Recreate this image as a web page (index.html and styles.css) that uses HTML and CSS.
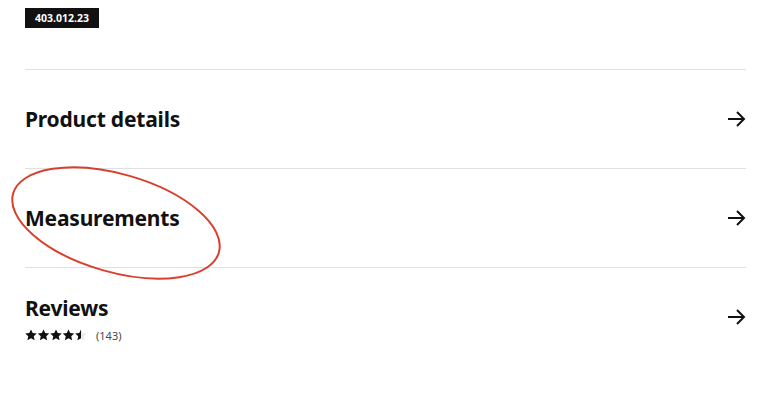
FILE: index.html
```html
<!DOCTYPE html>
<html lang="en">

<head>
  <meta charset="UTF-8">
  <meta name="viewport" content="width=device-width, initial-scale=1.0">
  <title>Product info</title>
  <link rel="stylesheet" href="styles.css">
</head>

<body>
  <div class="page">
    <span class="article-no">403.012.23</span>

    <div class="sections">
      <a class="section-row" href="#">
        <span class="section-title">Product details</span>
        <svg class="arrow" width="20" height="18" viewBox="0 0 20 18"><path d="M1 9h16M10 2l7 7-7 7" fill="none" stroke="#111" stroke-width="2"/></svg>
      </a>

      <a class="section-row" href="#">
        <span class="section-title">Measurements</span>
        <svg class="arrow" width="20" height="18" viewBox="0 0 20 18"><path d="M1 9h16M10 2l7 7-7 7" fill="none" stroke="#111" stroke-width="2"/></svg>
      </a>

      <a class="section-row" href="#">
        <div class="reviews">
          <span class="section-title">Reviews</span>
          <div class="rating">
            <svg class="stars" width="62" height="12" viewBox="0 0 62 12">
              <defs>
                <path id="star" d="M6 0.4l1.75 3.7 4 0.45-3 2.75 0.85 4-3.6-2.05-3.6 2.05 0.85-4-3-2.75 4-0.45z"/>
                <clipPath id="half"><rect x="0" y="0" width="6" height="12"/></clipPath>
              </defs>
              <use href="#star" x="0" fill="#111"/>
              <use href="#star" x="12.5" fill="#111"/>
              <use href="#star" x="25" fill="#111"/>
              <use href="#star" x="37.5" fill="#111"/>
              <use href="#star" x="50" fill="#ececec"/>
              <use href="#star" x="50" fill="#111" clip-path="url(#half)"/>
            </svg>
            <span class="count">(143)</span>
          </div>
        </div>
        <svg class="arrow" width="20" height="18" viewBox="0 0 20 18"><path d="M1 9h16M10 2l7 7-7 7" fill="none" stroke="#111" stroke-width="2"/></svg>
      </a>
    </div>
  </div>

  <!-- annotation mark -->
  <svg class="circle-mark" width="768" height="410" viewBox="0 0 768 410">
    <ellipse cx="116" cy="223" rx="107" ry="49" transform="rotate(16 116 223)" fill="none" stroke="#d9402c" stroke-width="2"/>
  </svg>
</body>

</html>
```

FILE: styles.css
```css
body {
  margin: 0;
  font-family: 'Noto Sans', 'Open Sans', sans-serif;
  color: #111;
  background-color: #fff;
  position: relative;
}

.page {
  padding: 8px 22px 0 25px;
}

.article-no {
  display: block;
  width: fit-content;
  background-color: #111;
  color: #fff;
  font-size: 10.5px;
  font-weight: 700;
  line-height: 20px;
  padding: 0 10px;
}

.sections {
  margin-top: 41px;
}

.section-row {
  display: flex;
  align-items: center;
  justify-content: space-between;
  height: 99px;
  box-sizing: border-box;
  border-top: 1px solid #e0e0e0;
  color: #111;
  text-decoration: none;
}

.section-title {
  font-size: 21px;
  font-weight: 700;
  letter-spacing: -0.2px;
  line-height: 28px;
  display: block;
}

.arrow {
  margin-right: -1px;
}

.reviews {
  margin-top: 2px;
}

.rating {
  display: flex;
  align-items: center;
  gap: 9px;
  margin-top: 6px;
}

.count {
  font-size: 11px;
  color: #484848;
}

.circle-mark {
  position: absolute;
  top: 0;
  left: 0;
  pointer-events: none;
}
```
